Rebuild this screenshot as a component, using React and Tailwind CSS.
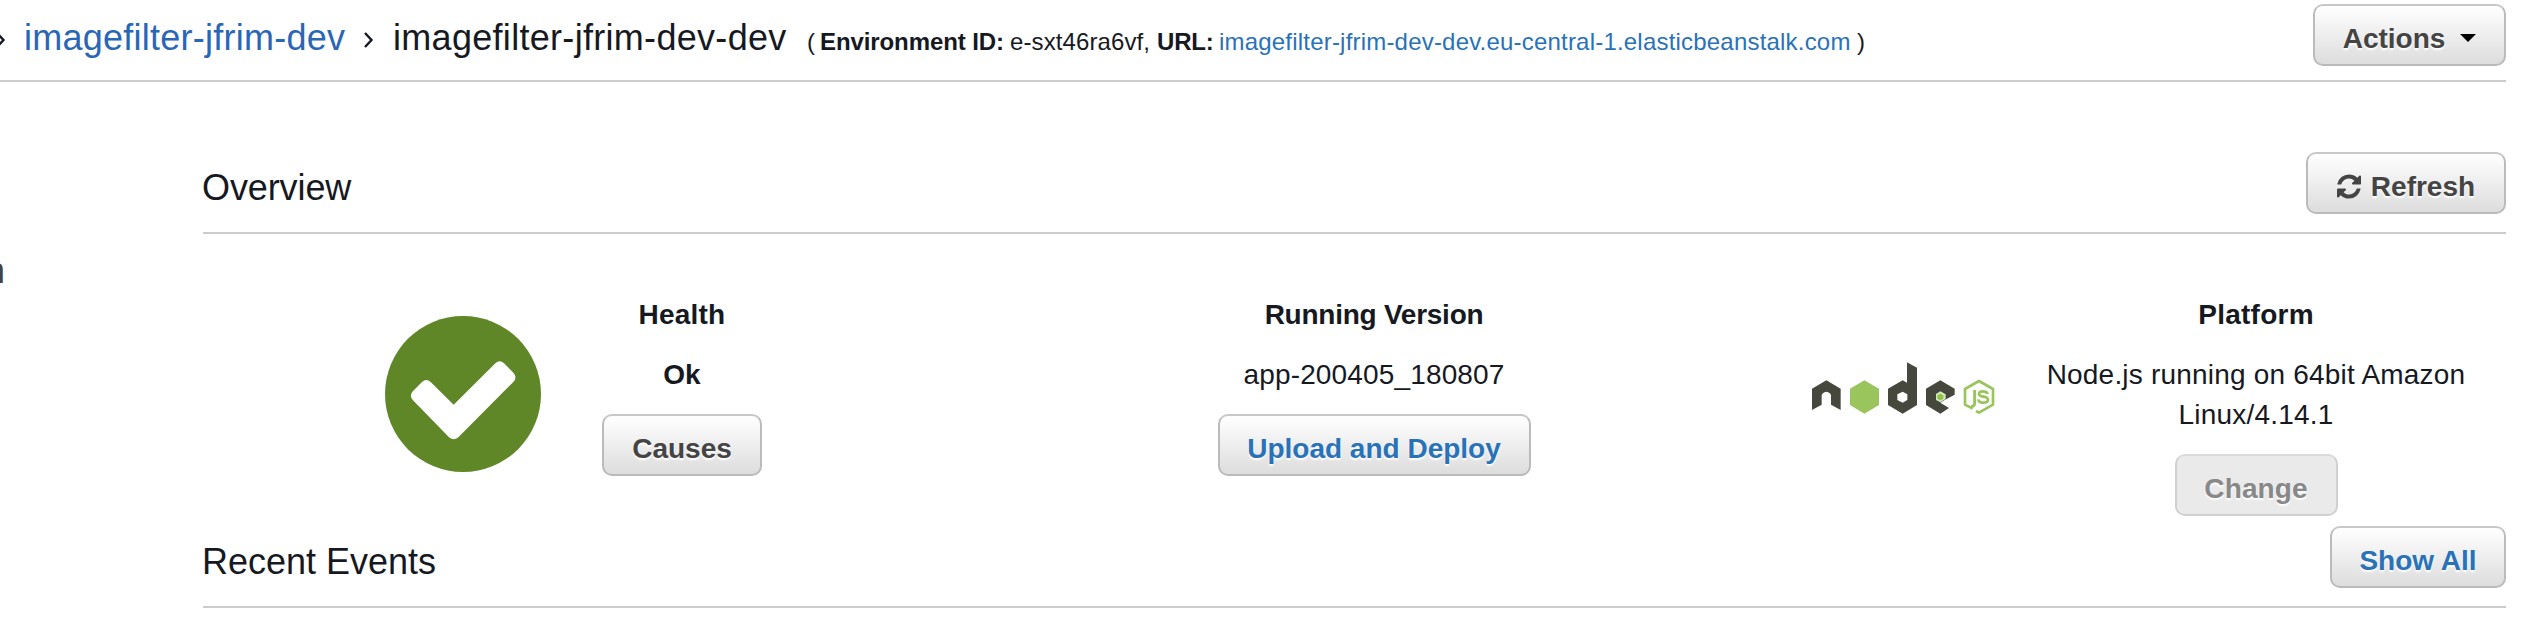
import React from "react";

function Button({ className = "", children }) {
  return (
    <button
      type="button"
      className={
        "flex h-[62px] shrink-0 items-center justify-center whitespace-nowrap rounded-[10px] border-2 pt-[8px] text-[28px] leading-[50px] font-bold [text-shadow:0_2px_2px_#fff] " +
        className
      }
    >
      {children}
    </button>
  );
}

const raised =
  "border-[#bbb] border-t-[#c8c8c8] bg-gradient-to-b from-white to-[#dddddd] ";

function Chevron({ className }) {
  return (
    <svg className={"shrink-0 " + className} width="12" height="18" viewBox="0 0 12 18" fill="none">
      <path d="M2 2l6.5 7-6.5 7" stroke="#16191f" strokeWidth="2.4" />
    </svg>
  );
}

function RefreshIcon() {
  return (
    <svg className="mr-[10px] mb-[2px] h-[25px] w-[24px]" viewBox="0 128 1536 1536" fill="#444">
      <path d="M1511 1056q0 5-1 7-64 268-268 434.5t-478 166.5q-146 0-282.5-55t-243.5-157l-129 129q-19 19-45 19t-45-19-19-45v-448q0-26 19-45t45-19h448q26 0 45 19t19 45-19 45l-137 137q71 66 161 102t187 36q134 0 250-65t186-179q11-17 53-117 8-23 30-23h192q13 0 22.5 9.5t9.5 22.5zm25-800v448q0 26-19 45t-45 19h-448q-26 0-45-19t-19-45 19-45l138-138q-148-137-349-137-134 0-250 65t-186 179q-11 17-53 117-8 23-30 23h-199q-13 0-22.5-9.5t-9.5-22.5v-7q65-268 270-434.5t480-166.5q146 0 284 55.5t245 156.5l130-129q19-19 45-19t45 19 19 45z" />
    </svg>
  );
}

function HealthIcon() {
  return (
    <svg className="mt-[82px] ml-[182px] h-[156px] w-[156px] shrink-0" viewBox="76 107 468 468">
      <circle cx="310" cy="341" r="234" fill="#5f8728" />
      <path
        d="M160 332L187 305Q200 293 213 305L282 373L407 249Q420 237 433 249L461 277Q474 291 461 305L296 471Q282 483 268 471L160 360Q147 346 160 332Z"
        fill="#fff"
      />
    </svg>
  );
}

function NodeLogo() {
  return (
    <svg className="mt-[128px] h-[52px] w-[183px] shrink-0" viewBox="66 66 549 156">
      <g fill="#46483e">
        <path d="M66 146L109 121L152 146V210L123 194V165Q121 157 109 155Q97 157 95 165V194L66 210Z" />
        <path
          fillRule="evenodd"
          d="M351 67L381 83V195L338 221L294 195V146L338 121L351 128ZM338 155L322 163V180L338 188L352 180V163Z"
        />
        <path d="M451 121L494 146V164L464 180L451 188L477 204L451 221L408 195V146Z" />
      </g>
      <path d="M451 154L467 163V177L451 187L438 180V162Z" fill="#d5e6c0" />
      <path d="M223 121L267 146V195L223 221L180 195V146Z" fill="#99c55c" />
      <path d="M451 161L460 166V176L451 181L442 176V166Z" fill="#8cc63f" />
      <g fill="none" stroke="#99c55c" strokeLinejoin="round">
        <path d="M548 206L525 194V147L567 123L609 147V194L567 218L558 213" strokeWidth="8" />
        <path d="M554 150V190Q554 201 543 198" strokeWidth="9" />
        <path d="M593 162Q591 154 579 154Q567 154 567 162Q567 168 580 170Q594 172 594 180Q594 188 580 188Q566 188 565 178" strokeWidth="8" />
      </g>
    </svg>
  );
}

export default function App() {
  return (
    <div className="flex h-[624px] w-[2534px] flex-col overflow-hidden bg-white pr-[28px] font-['Liberation_Sans',Arial,sans-serif] text-[28px] text-[#16191f]">
      <header className="flex h-[82px] shrink-0 items-start justify-between border-b-2 border-[#ccc]">
        <div className="flex items-baseline whitespace-nowrap text-[36px] leading-[75px]">
          <Chevron className="-ml-[5px] relative top-[-1px]" />
          <a className="ml-[17px] w-[322px] tracking-[0.25px] text-[#2a66b8]">imagefilter-jfrim-dev</a>
          <Chevron className="ml-[17px] relative top-[-1px]" />
          <span className="ml-[18px] w-[414px] tracking-[0.3px]">imagefilter-jfrim-dev-dev</span>
          <span className="w-[13px] text-[24px]">(</span>
          <b className="w-[190px] text-[24px] tracking-[-0.1px]">Environment ID:</b>
          <span className="w-[147px] text-[24px] tracking-[0.1px]">e-sxt46ra6vf,</span>
          <b className="w-[62px] text-[24px] tracking-[-0.2px]">URL:</b>
          <a className="w-[638px] text-[24px] tracking-[0.2px] text-[#2a72b8]">
            imagefilter-jfrim-dev-dev.eu-central-1.elasticbeanstalk.com
          </a>
          <span className="text-[24px]">)</span>
        </div>
        <Button className={raised + "mt-[4px] w-[193px] text-[#444]"}>
          Actions
          <svg className="mb-[3px] ml-[15px]" width="16" height="8" viewBox="0 0 16 8">
            <path d="M0 0H16L8 8Z" fill="#000" />
          </svg>
        </Button>
      </header>

      <div className="flex min-h-0 flex-1">
        <aside className="w-[203px] shrink-0 overflow-hidden pt-[167px]">
          <span className="-ml-[15px] block text-[36px] leading-[44px] text-[#444]">n</span>
        </aside>

        <main className="flex min-w-0 flex-1 flex-col">
          <div className="flex h-[152px] shrink-0 items-start justify-between border-b-2 border-[#ccc] pt-[70px]">
            <h2 className="-ml-[1px] text-[36px] leading-[72px] tracking-[-0.1px]">Overview</h2>
            <Button className={raised + "w-[200px] text-[#444]"}>
              <RefreshIcon />
              Refresh
            </Button>
          </div>

          <section className="flex h-[292px] shrink-0">
            <HealthIcon />
            <div className="mt-[61px] ml-[1px] flex w-[280px] flex-col items-center">
              <h3 className="leading-[40px] font-bold tracking-[0.2px]">Health</h3>
              <p className="mt-[20px] leading-[40px] font-bold">Ok</p>
              <Button className={raised + "mt-[19px] w-[160px] text-[#444]"}>Causes</Button>
            </div>
            <div className="mt-[61px] ml-[352px] flex w-[400px] flex-col items-center">
              <h3 className="leading-[40px] font-bold tracking-[-0.25px]">Running Version</h3>
              <p className="mt-[20px] leading-[40px] tracking-[0.15px]">app-200405_180807</p>
              <Button className={raised + "mt-[19px] w-[313px] text-[#2a72b8]"}>Upload and Deploy</Button>
            </div>
            <div className="ml-[238px] flex">
              <NodeLogo />
              <div className="mt-[61px] ml-[11px] flex w-[500px] flex-col items-center">
                <h3 className="leading-[40px] font-bold tracking-[0.25px]">Platform</h3>
                <p className="mt-[20px] text-center leading-[40px] tracking-[0.2px]">
                  Node.js running on 64bit Amazon
                  <br />
                  Linux/4.14.1
                </p>
                <Button className="mt-[19px] w-[163px] border-[#d0d0d0] border-t-[#dadada] bg-[#eaeaea] tracking-[0.1px] text-[#888]">
                  Change
                </Button>
              </div>
            </div>
          </section>

          <div className="flex h-[82px] shrink-0 items-start justify-between border-b-2 border-[#ccc]">
            <h2 className="-ml-[1px] mt-[-2px] text-[36px] leading-[75px]">Recent Events</h2>
            <Button className={raised + "w-[176px] text-[#2a72b8]"}>Show All</Button>
          </div>
        </main>
      </div>
    </div>
  );
}
